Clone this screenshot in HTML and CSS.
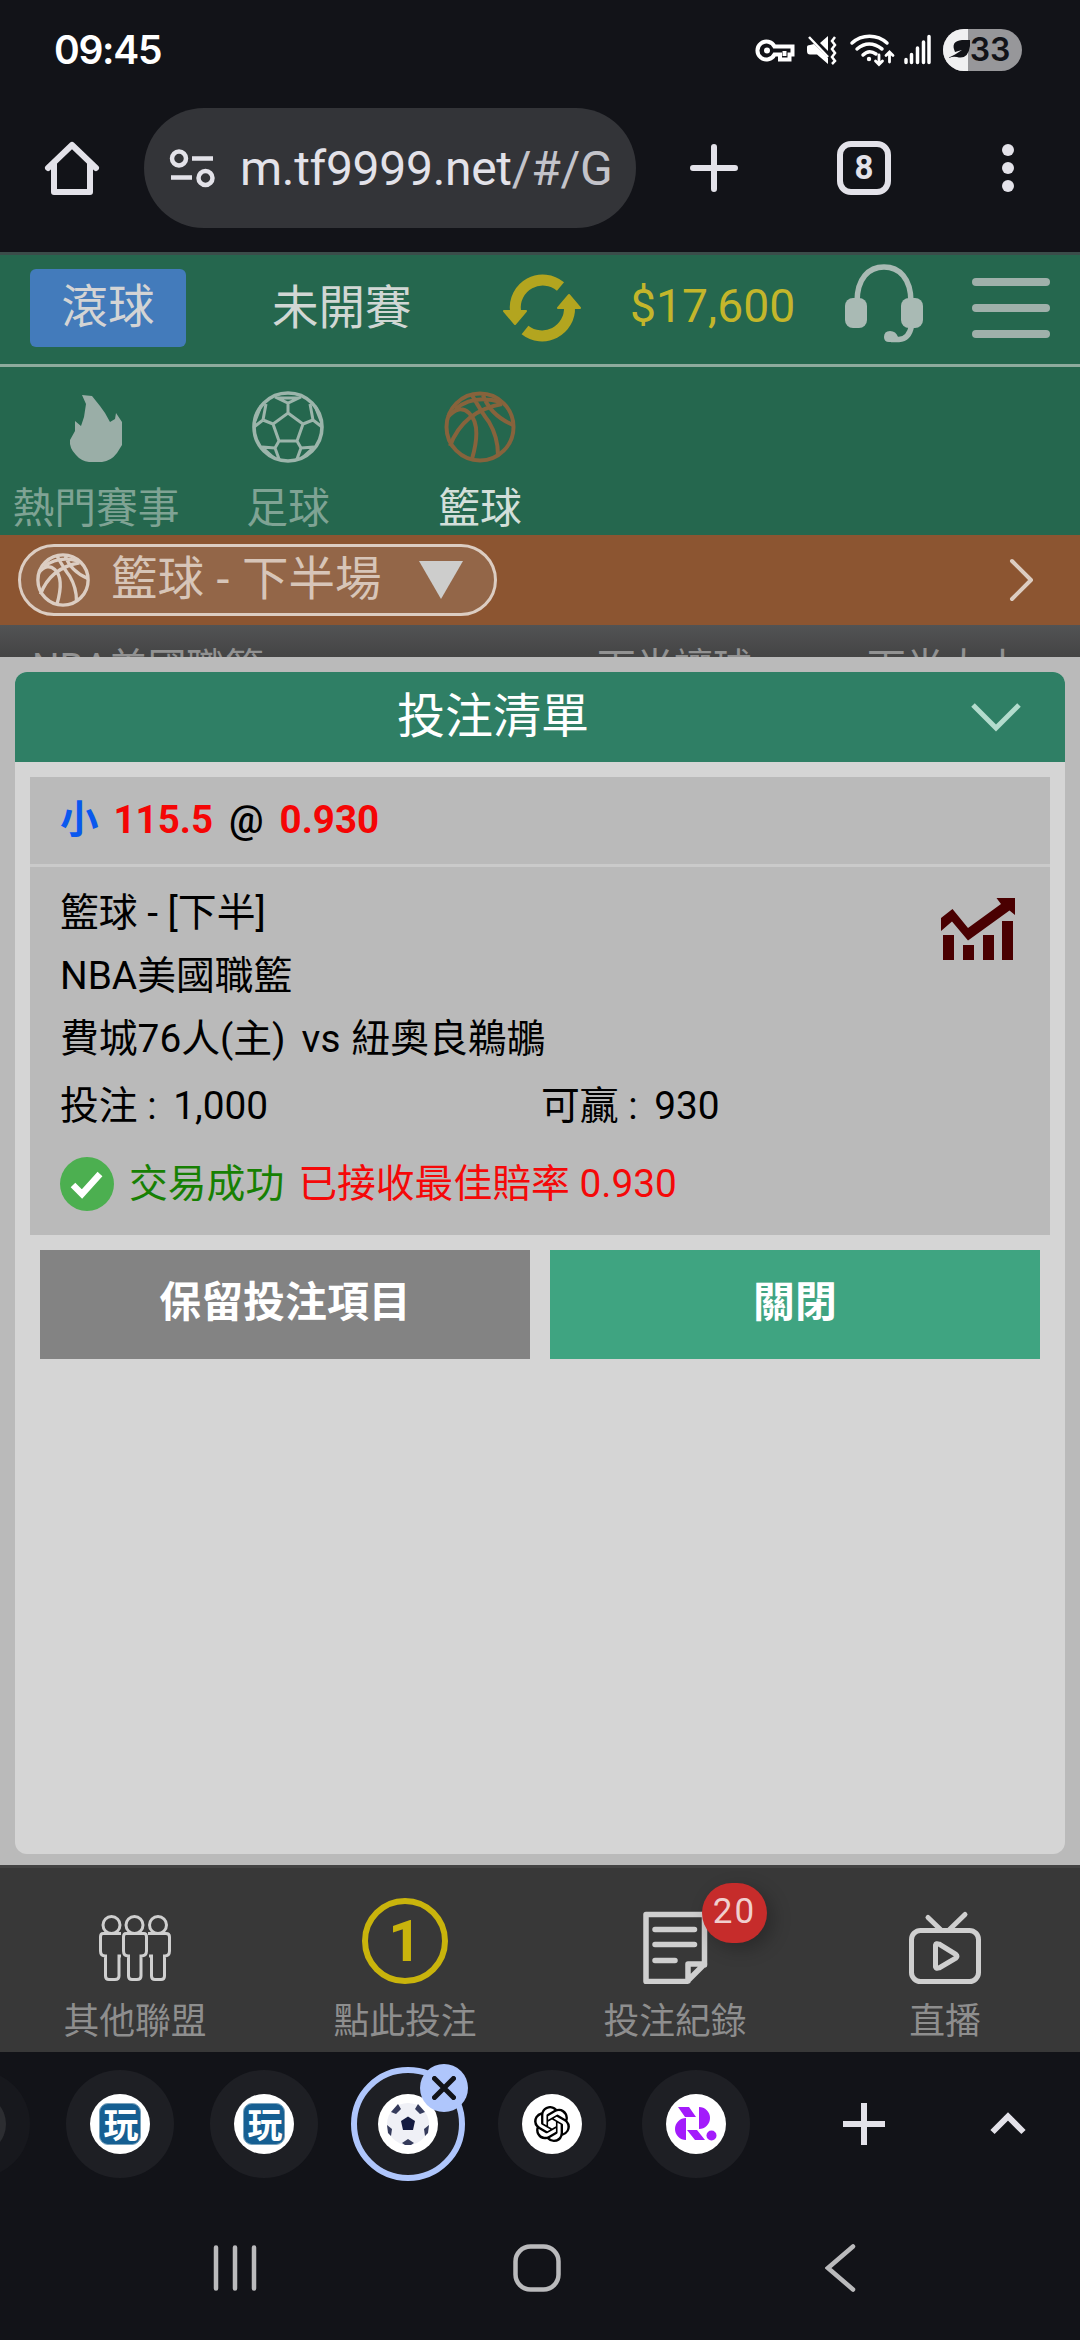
FILE: index.html
```html
<!DOCTYPE html>
<html lang="zh-Hant">
<head>
<meta charset="utf-8">
<title>投注清單</title>
<link rel="stylesheet" href="styles.css">
</head>
<body>
<svg class="defs" width="0" height="0">
  <symbol id="basketball" viewBox="0 0 72 72">
    <circle cx="36" cy="36" r="33.5"/>
    <path d="M4 26Q15 13 25 22Q38 34 28 68M6 55Q19 20 58 13M28 4Q38 22 45 31Q54 46 54 64M39 4Q46 24 69 34M11 18Q30 3 57 11"/>
  </symbol>
</svg>

<div class="status">
  <span class="clock">09:45</span>
  <svg class="status-icons" viewBox="754 26 272 48" width="272" height="48">
    <g fill="none" stroke="#fff" stroke-width="4" transform="translate(1.5 0)">
      <path d="M773 46.500A9 9 0 1 0 773 54.500H778.500V59.500H788V54.500H791V46.500Z"/>
    </g>
    <circle cx="767" cy="50.500" r="3" fill="#fff"/>
    <path d="M784.500 51v5" stroke="#fff" stroke-width="4"/>
    <g fill="#fff"><path d="M820 43L828 36V51ZM807 47Q807 45 810 45L814 44L828 58V64L817 54.500H810Q807 54.500 807 51Z"/></g>
    <path d="M809 37L828 57" stroke="#fff" stroke-width="2.500"/>
    <path d="M835 37L832 41L835 45L832 49L835 53L832 57L835 61L832 64" stroke="#fff" stroke-width="2.500" fill="none"/>
    <g fill="none" stroke="#fff" stroke-width="3.500" stroke-linecap="round">
      <path d="M852 43A26 26 0 0 1 887 43M857 49Q869 39 882 49M863 55Q869 49 876 54"/>
      <path d="M879 55V64M875.500 61L879 64.500L882.500 61M889.500 62V53M886 55.500L889.500 52L893 55.500" stroke-width="2.800"/>
    </g>
    <circle cx="869" cy="59" r="2.200" fill="#fff"/>
    <path d="M906 59.500V62.500M911.500 54.500V62.500M917.500 48V62.500M923.500 42V62.500M929 36.500V62.500" stroke="#fff" stroke-width="3.500" stroke-linecap="round"/>
    <rect x="943" y="29" width="79" height="42" rx="21" fill="#97979a"/>
    <path d="M968 29H964A21 21 0 0 0 964 71H968Z" fill="#f0f0f1"/>
    <path d="M949 57.500L955 54.500L962 50L955 52Q950 41 962 40H970V46Q968 60 957 57Q953 56 949 58Z" fill="#121318"/>
    <text x="990" y="61" class="battery" text-anchor="middle">33</text>
  </svg>
</div>

<div class="toolbar">
  <svg class="home" viewBox="43 138 58 60" width="58" height="60"><path d="M48 168L72 145L96 168M54 163V192H90V163" fill="none" stroke="#e3e2e9" stroke-width="6" stroke-linejoin="round" stroke-linecap="round"/></svg>
  <div class="omnibox">
    <svg viewBox="168 146 50 44" width="50" height="44" fill="none" stroke="#e3e2e9" stroke-width="4.500"><circle cx="179" cy="158.500" r="7"/><path d="M192 158.500H213M171 177.500H192"/><circle cx="205.500" cy="178" r="7"/></svg>
    <span class="url">m.tf9999.net<span class="path">/#/G</span></span>
  </div>
  <svg class="tool plus" viewBox="0 0 48 48" width="48" height="48"><path d="M24 3V45M3 24H45" stroke="#e3e2e9" stroke-width="6" stroke-linecap="round"/></svg>
  <div class="tabcount">8</div>
  <svg class="dots" viewBox="0 0 12 48" width="12" height="48" fill="#e3e2e9"><circle cx="6" cy="6" r="6"/><circle cx="6" cy="24" r="6"/><circle cx="6" cy="42" r="6"/></svg>
</div>

<div class="topbar">
  <div class="live">滾球</div>
  <div class="upcoming">未開賽</div>
  <svg class="refresh" viewBox="502 270 80 76" width="80" height="76">
    <g fill="none" stroke="#b3a51f" stroke-width="11"><path d="M515.500 311A27.500 27.500 0 0 1 560.500 286.500M569.500 307A27.500 27.500 0 0 1 525 330"/></g>
    <g fill="#b3a51f" stroke="#b3a51f" stroke-width="2" stroke-linejoin="round"><path d="M504 311H526L515 324Z"/><path d="M558 308H580L569 295Z"/></g>
  </svg>
  <div class="balance">$17,600</div>
  <svg class="headset" viewBox="844 262 80 82" width="80" height="82">
    <path d="M857 302C857 278 869 267 884 267S911 278 911 302M911.500 326Q909 339 899 339.500H891" fill="none" stroke="#a9bab4" stroke-width="5.500"/>
    <g fill="#a9bab4"><rect x="845" y="298" width="22" height="30" rx="8"/><rect x="901" y="298" width="22" height="30" rx="8"/><path d="M890 331Q896 331 898 337V342H889Q884 342 884 337Q884 331 890 331Z"/></g>
  </svg>
  <div class="menu"><i></i><i></i><i></i></div>
</div>

<div class="sports">
  <div class="sport">
    <svg width="72" height="72" viewBox="0 0 72 72"><path transform="translate(9 4)" fill="#9aaea7" d="M13 0L23 1L31 11L36 18L41 27L46 24L47 18L53 27V50L48 58Q42 66 33 67H20Q12 66 7 60Q0 53 1 45L6 36V26L12 31L15 22L17 9Z"/></svg>
    <span>熱門賽事</span>
  </div>
  <div class="sport">
    <svg width="72" height="72" viewBox="0 0 72 72" fill="none" stroke="#9cb5ab" stroke-width="3.600"><circle cx="36" cy="36" r="34"/>
      <path stroke-width="3" d="M36 22L51 33L45 50H27L21 33ZM36 22V12M51 33L61 29M45 50L49 57M27 50L23 57M21 33L11 29M23 6L36 12L49 6M25 7H47M61 29L58 13M61 29L70 36M63 15L69 30M11 29L14 13M11 29L2 36M9 15L3 30M49 57L62 56M49 57L45 68M61 57L50 67M23 57L10 56M23 57L27 68M11 57L22 67"/></svg>
    <span>足球</span>
  </div>
  <div class="sport active">
    <svg width="72" height="72" fill="none" stroke="#87633c" stroke-width="4"><use href="#basketball"/></svg>
    <span>籃球</span>
  </div>
</div>

<div class="league">
  <div class="picker">
    <svg width="54" height="54" fill="none" stroke="#dccdc2" stroke-width="4.500"><use href="#basketball"/></svg>
    <span>籃球 - 下半場</span>
    <svg width="44" height="38" viewBox="0 0 44 38"><path d="M0 0H44L22 38Z" fill="#cdcdcc"/></svg>
  </div>
  <svg class="next" width="26" height="44" viewBox="0 0 26 44"><path d="M3 3L22 22L3 41" fill="none" stroke="#dccdc2" stroke-width="4" stroke-linecap="round" stroke-linejoin="round"/></svg>
</div>

<div class="odds-head"><span class="col-name">NBA美國職籃</span><span class="col-hcp">下半讓球</span><span class="col-ou">下半大小</span></div>

<div class="sheet">
  <div class="slip">
    <div class="slip-head">
      <span>投注清單</span>
      <svg width="52" height="32" viewBox="0 0 52 32"><path d="M3 4L26 27L49 4" fill="none" stroke="#b3dccd" stroke-width="5"/></svg>
    </div>
    <div class="ticket">
      <div class="pick"><b class="side">小</b><b class="num">115.5</b><b class="at">@</b><b class="num">0.930</b></div>
      <div class="details">
        <div class="match">
          <div class="lines">
            <p>籃球 - [下半]</p>
            <p>NBA美國職籃</p>
            <p>費城76人(主)<span class="vs">vs</span>紐奧良鵜鶘</p>
          </div>
          <svg class="chart" width="76" height="66" viewBox="940 896 76 66" fill="#4a0001"><path d="M941 918L952.500 909L968 928L1001 904L996.500 898H1015V915L1009.500 910.500L968 940.500L952 921.500L941 931Z"/><path d="M943 935h11v25h-11zM963 945h11v15h-11zM983 935h11v25h-11zM1002 921h11v39h-11z"/></svg>
        </div>
        <div class="stake"><span>投注 : <span class="amount">1,000</span></span><span>可贏 : <span class="amount">930</span></span></div>
        <div class="result">
          <svg width="54" height="54" viewBox="0 0 54 54"><circle cx="27" cy="27" r="27" fill="#4caf50"/><path d="M13 28L22 37L40 17" fill="none" stroke="#fff" stroke-width="6.500"/></svg>
          <span class="ok">交易成功</span><span class="note">已接收最佳賠率 0.930</span>
        </div>
      </div>
    </div>
    <div class="actions"><button class="keep">保留投注項目</button><button class="close">關閉</button></div>
  </div>
</div>

<div class="tabbar">
  <div class="tab">
    <svg width="86" height="86" viewBox="92 1898 86 86" fill="none" stroke="#cfcfcf" stroke-width="3">
      <circle cx="111.500" cy="1925" r="8.500"/><circle cx="134.500" cy="1925" r="8.500"/><circle cx="158" cy="1925" r="8.500"/>
      <path d="M121 1933.500H103Q100.500 1933.500 100.500 1937V1951Q100.500 1956 105.500 1956V1976Q105.500 1979.500 109 1979.500H115Q119 1979.500 119 1976V1956H121M148 1933.500H166Q169.500 1933.500 169.500 1937V1951Q169.500 1956 164.500 1956V1976Q164.500 1979.500 161 1979.500H155Q151.500 1979.500 151.500 1976V1956H149M126 1933.500H144Q146.500 1933.500 146.500 1937V1951Q146.500 1956 141 1956V1976Q141 1979.500 137 1979.500H132Q128.500 1979.500 128.500 1976V1956Q123.500 1956 123.500 1951V1937Q123.500 1933.500 126 1933.500Z"/></svg>
    <span>其他聯盟</span>
  </div>
  <div class="tab"><div class="ring">1</div><span>點此投注</span></div>
  <div class="tab">
    <div class="iconwrap">
      <svg width="86" height="86" viewBox="632 1898 86 86" fill="none" stroke="#cfcfcf" stroke-width="5.500" stroke-linejoin="round" stroke-linecap="round"><path d="M704.500 1965V1914.500H646V1981.500H687L704.500 1964H688V1981M655 1929.500H694.500M655 1944.500H694.500M655 1960.500H675"/></svg>
      <b class="badge">20</b>
    </div>
    <span>投注紀錄</span>
  </div>
  <div class="tab">
    <svg width="86" height="86" viewBox="902 1898 86 86" fill="none" stroke="#cfcfcf" stroke-width="5" stroke-linejoin="round" stroke-linecap="round"><rect x="911.500" y="1930.500" width="67" height="51" rx="9"/><path d="M928 1917.500L941 1930M965 1914.500L949 1930M935.500 1945V1967Q936 1969 939 1968L956 1958Q958 1956 956 1954.500L939 1944Q936 1943 935.500 1945Z"/></svg>
    <span>直播</span>
  </div>
</div>

<div class="strip">
  <div class="fav edge"><div class="disc dim"></div></div>
  <div class="fav"><div class="disc"><div class="wan">玩</div></div></div>
  <div class="fav"><div class="disc"><div class="wan">玩</div></div></div>
  <div class="fav current">
    <div class="disc"><svg width="42" height="42" viewBox="0 0 42 42"><circle cx="21" cy="21" r="21" fill="#eff0f6"/><g fill="#141b40"><path d="M21 13.500L28 18L26 27H16L14 18Z"/><path d="M4 9L11 1L14 6L9 11ZM38 9L31 1L28 6L33 11ZM0 22L5 26L4 33L1 30ZM42 22L37 26L38 33L41 30ZM15 40L21 36L27 40L24 42H18Z" opacity=".85"/></g></svg></div>
    <div class="x"><svg width="24" height="24" viewBox="0 0 24 24"><path d="M2.500 2.500L21.500 21.500M21.500 2.500L2.500 21.500" stroke="#121318" stroke-width="5" stroke-linecap="round"/></svg></div>
  </div>
  <div class="fav"><div class="disc"><svg width="36" height="36" viewBox="0 0 24 24"><path d="M22.2819 9.8211a5.9847 5.9847 0 0 0-.5157-4.9108 6.0462 6.0462 0 0 0-6.5098-2.9A6.0651 6.0651 0 0 0 4.9807 4.1818a5.9847 5.9847 0 0 0-3.9977 2.9 6.0462 6.0462 0 0 0 .7427 7.0966 5.98 5.98 0 0 0 .511 4.9107 6.051 6.051 0 0 0 6.5146 2.9001A5.9847 5.9847 0 0 0 13.2599 24a6.0557 6.0557 0 0 0 5.7718-4.2058 5.9894 5.9894 0 0 0 3.9977-2.9001 6.0557 6.0557 0 0 0-.7475-7.073zm-9.022 12.6081a4.4755 4.4755 0 0 1-2.8764-1.0408l.1419-.0804 4.7783-2.7582a.7948.7948 0 0 0 .3927-.6813v-6.7369l2.02 1.1686a.071.071 0 0 1 .038.052v5.5826a4.504 4.504 0 0 1-4.4945 4.4944zm-9.6607-4.1254a4.4708 4.4708 0 0 1-.5346-3.0137l.142.0852 4.783 2.7582a.7712.7712 0 0 0 .7806 0l5.8428-3.3685v2.3324a.0804.0804 0 0 1-.0332.0615L9.74 19.9502a4.4992 4.4992 0 0 1-6.1408-1.6464zM2.3408 7.8956a4.485 4.485 0 0 1 2.3655-1.9728V11.6a.7664.7664 0 0 0 .3879.6765l5.8144 3.3543-2.0201 1.1685a.0757.0757 0 0 1-.071 0l-4.8303-2.7865A4.504 4.504 0 0 1 2.3408 7.872zm16.5963 3.8558L13.1038 8.364 15.1192 7.2a.0757.0757 0 0 1 .071 0l4.8303 2.7913a4.4944 4.4944 0 0 1-.6765 8.1042v-5.6772a.79.79 0 0 0-.407-.667zm2.0107-3.0231l-.142-.0852-4.7735-2.7818a.7759.7759 0 0 0-.7854 0L9.409 9.2297V6.8974a.0662.0662 0 0 1 .0284-.0615l4.8303-2.7866a4.4992 4.4992 0 0 1 6.6802 4.66zM8.3065 12.863l-2.02-1.1638a.0804.0804 0 0 1-.038-.0567V6.0742a4.4992 4.4992 0 0 1 7.3757-3.4537l-.142.0805L8.704 5.459a.7948.7948 0 0 0-.3927.6813zm1.0976-2.3654l2.602-1.4998 2.6069 1.4998v2.9994l-2.5974 1.4997-2.6067-1.4997Z"/></svg></div></div>
  <div class="fav"><div class="disc"><svg width="42" height="36" viewBox="0 0 42 36" fill="#a31bfb"><path d="M3 1H14L21 11H10ZM24 1A11 11 0 0 1 24 23ZM11 12V34A11 11 0 0 1 11 12ZM12 24H22L30 34H20Z"/><circle cx="36.500" cy="29.500" r="5"/></svg></div></div>
  <svg class="newtab" width="42" height="42" viewBox="0 0 42 42"><path d="M21 0V42M0 21H42" stroke="#e3e2e9" stroke-width="6"/></svg>
  <svg class="expand" width="36" height="24" viewBox="0 0 36 24"><path d="M2.500 20L18 4.500L33.500 20" fill="none" stroke="#e3e2e9" stroke-width="6"/></svg>
</div>

<div class="nav">
  <svg width="44" height="48" viewBox="0 0 44 48"><path d="M3 3.500V44.500M22 3.500V44.500M41 3.500V44.500" stroke="#bababc" stroke-width="4.500" stroke-linecap="round"/></svg>
  <svg class="nav-home" width="48" height="48" viewBox="0 0 48 48"><rect x="2.500" y="2.500" width="43" height="43" rx="15" fill="none" stroke="#bababc" stroke-width="4.500"/></svg>
  <svg width="32" height="48" viewBox="0 0 32 48"><path d="M28 2.500L3 24L28 45.500" fill="none" stroke="#bababc" stroke-width="4.500" stroke-linecap="round"/></svg>
</div>
</body>
</html>
```
FILE: styles.css
```css
* { box-sizing: border-box; }
body { margin: 0; width: 1080px; height: 2340px; overflow: hidden; background: #121318; font-family: Roboto, "Noto Sans CJK TC", sans-serif; }
svg { display: block; flex: none; }
.defs { position: absolute; }

.status { height: 100px; display: flex; align-items: flex-start; justify-content: space-between; padding: 26px 54px 0; color: #fff; }
.clock { font: 600 39px/48px Inter, sans-serif; letter-spacing: -1.3px; }
.battery { font: 600 32px Inter, sans-serif; fill: #121318; }

.toolbar { height: 152px; display: flex; align-items: center; padding: 0 66px 16px 43px; }
.omnibox { width: 492px; height: 120px; margin-left: 43px; padding-left: 24px; border-radius: 60px; background: #333438; display: flex; align-items: center; }
.url { margin-left: 22px; padding-top: 2px; font-size: 48px; line-height: 60px; letter-spacing: -.3px; color: #e3e2e9; white-space: nowrap; }
.path { color: #c3c3ca; }
.plus { margin-left: 54px; }
.tabcount { width: 54px; height: 54px; margin-left: 99px; border: 6px solid #e3e2e9; border-radius: 14px; color: #e3e2e9; font: 700 33px/42px Roboto, sans-serif; text-align: center; }
.dots { margin-left: 111px; }

.topbar { height: 115px; border-top: 3px solid #3b4d4a; border-bottom: 3px solid #8eab9d; background: #25674e; display: flex; align-items: center; padding: 0 30px 3px; }
.live { width: 156px; height: 78px; border-radius: 6px; background: #437bbb; font-size: 46.500px; line-height: 76px; text-align: center; color: #d4d4d4; }
.upcoming { width: 140px; margin-left: 86px; font-size: 46.500px; line-height: 70px; color: #d1d7d4; white-space: nowrap; }
.refresh { margin-left: 90px; }
.balance { width: 168px; margin-left: 48px; padding-bottom: 5px; font-size: 46.300px; line-height: 60px; color: #c4b62b; }
.headset { margin: -10px 0 0 46px; }
.menu { width: 78px; margin-left: 48px; display: flex; flex-direction: column; gap: 18px; }
.menu i { height: 8px; border-radius: 4px; background: #9fb0aa; }

.sports { height: 168px; background: #25674e; display: flex; padding-top: 24px; }
.sport { width: 192px; display: flex; flex-direction: column; align-items: center; font-size: 41.800px; line-height: 60px; color: #7fa394; white-space: nowrap; }
.sport span { margin-top: 16px; }
.sport.active { color: #d3dfda; }

.league { height: 90px; background: #8c5531; display: flex; align-items: center; justify-content: space-between; padding: 0 45px 0 18px; }
.picker { width: 479px; height: 72px; border: 3px solid #dccdc2; border-radius: 36px; background: #936648; display: flex; align-items: center; padding-left: 15px; color: #d7c5b8; font-size: 46.500px; line-height: 60px; white-space: nowrap; }
.picker span { width: 329px; padding: 0 0 3px 21px; word-spacing: 1px; }

.odds-head { height: 32px; overflow: hidden; background: linear-gradient(#525354, #444); color: #929292; font-size: 38.700px; line-height: 48px; display: flex; padding: 19px 0 0 32px; white-space: nowrap; }
.col-name { width: 565px; }
.col-hcp { width: 270px; }

.sheet { height: 1208px; background: #bababa; padding: 15px 15px 11px; }
.slip { height: 1182px; border-radius: 12px; overflow: hidden; background: #d5d5d5; }
.slip-head { height: 90px; background: #2f7f65; display: flex; align-items: center; justify-content: space-between; padding: 0 43px 0 382px; color: #fff; font-size: 48px; line-height: 70px; }
.ticket { height: 458px; margin: 15px 15px 0; background: #bababa; color: #000; font-size: 38.800px; }
.pick { height: 90px; border-bottom: 3px solid #cacaca; padding: 0 30px; display: flex; font-size: 38.500px; line-height: 86px; }
.side { color: #0a58ee; margin-right: 15px; }
.at { font-weight: 500; margin: 0 16px; }
.num { color: #f50505; }
.details { padding: 14px 30px; }
.match { display: flex; justify-content: space-between; }
.lines p { margin: 0; height: 63px; line-height: 63px; white-space: nowrap; }
.vs { margin: 0 11px 0 16px; }
.chart { margin: 15px 4px 0 0; }
.stake { display: grid; grid-template-columns: 481px 1fr; height: 73px; line-height: 71px; }
.amount { margin-left: 7px; }
.result { display: flex; align-items: center; height: 81px; white-space: nowrap; }
.result span { padding-bottom: 7px; }
.ok { color: #178003; margin: 0 14px 0 15px; }
.note { color: #f50808; }
.actions { display: grid; grid-template-columns: 490px 490px; gap: 20px; padding: 15px 25px 0; }
.actions button { height: 109px; border: 0; padding: 0 0 3px; color: #fff; font: 700 41.900px/60px Roboto, "Noto Sans CJK TC", sans-serif; }
.keep { background: #838383; }
.close { background: #3fa481; }

.tabbar { height: 187px; background: #383838; border-top: 3px solid #434343; display: grid; grid-template-columns: repeat(4, 270px); padding-top: 30px; }
.tab { display: flex; flex-direction: column; align-items: center; font-size: 35.800px; line-height: 50px; color: #8e8e8e; }
.tab > span { margin-top: 13px; }
.ring { width: 86px; height: 86px; border: 6px solid #c9b40c; border-radius: 50%; color: #c9b40c; font: 700 58px/74px Roboto, sans-serif; text-align: center; }
.iconwrap { position: relative; }
.badge { position: absolute; left: 70px; top: -15px; width: 65px; height: 60px; border-radius: 32px; background: #c62c2b; color: #f0cfcf; font: 400 35px/58px Roboto, sans-serif; letter-spacing: 2px; text-align: center; box-shadow: 6px 6px 18px rgba(0,0,0,.25); }

.strip { height: 144px; display: flex; align-items: center; }
.fav { width: 108px; height: 108px; margin-left: 36px; border-radius: 50%; background: #1e1f24; display: flex; align-items: center; justify-content: center; flex: none; }
.fav.edge { margin-left: -78px; background: #17181d; }
.disc { width: 60px; height: 60px; border-radius: 50%; background: #fff; display: flex; align-items: center; justify-content: center; }
.dim { background: #2c2d31; }
.wan { width: 42px; height: 42px; border-radius: 9px; background: #165f92; border: 1px solid #79a3bd; color: #fff; font: 700 35px/38px "Noto Sans CJK TC", sans-serif; text-align: center; text-indent: 2px; }
.current { position: relative; width: 114px; height: 114px; margin: 0 -3px 0 33px; border: 6px solid #afc6fc; }
.x { position: absolute; left: 63px; top: -9px; width: 48px; height: 48px; border-radius: 50%; background: #afc6fc; display: flex; align-items: center; justify-content: center; }
.newtab { margin-left: 93px; }
.expand { margin-left: 105px; }

.nav { height: 144px; display: flex; padding: 48px 0 0 213px; }
.nav-home { margin: 0 264px 0 256px; }
```
